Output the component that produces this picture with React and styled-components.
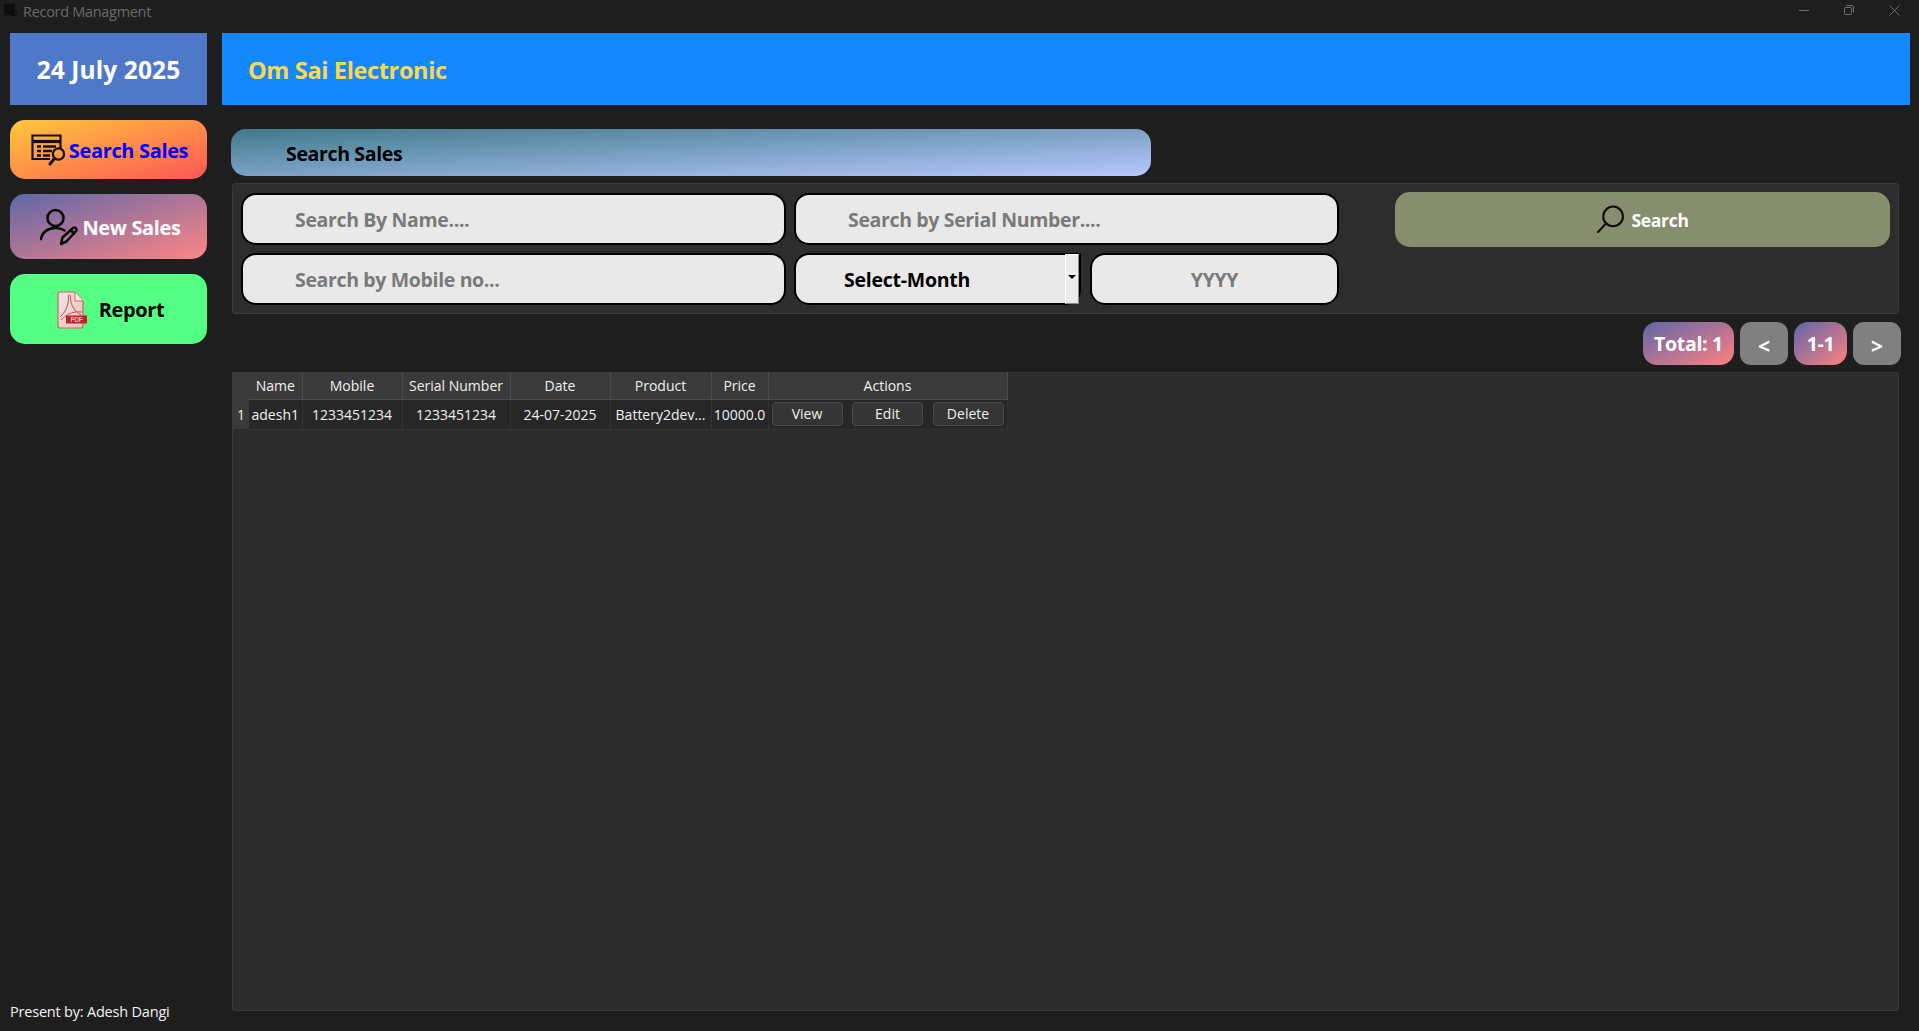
import React from 'react';
import styled, { createGlobalStyle } from 'styled-components';

const GlobalStyle = createGlobalStyle`
    html, body {
        margin: 0;
        padding: 0;
        height: 100%;
        background: #1e1e1e;
        overflow: hidden;
    }
    * {
        box-sizing: border-box;
    }
`;

const FONT = `'Open Sans', 'Noto Sans', sans-serif`;

const Window = styled.div`
    width: 100%;
    height: 100vh;
    display: flex;
    flex-direction: column;
    font-family: ${FONT};
    color: white;
    background: #1e1e1e;
`;

const TitleBar = styled.div`
    height: 33px;
    flex-shrink: 0;
    display: flex;
    align-items: flex-start;
    padding: 3px 19px 0 4px;
    color: #6a6a6a;
    font-size: 14.5px;
    letter-spacing: -0.3px;
    line-height: 18px;
`;

const TitleText = styled.span`
    margin-left: 4px;
`;

const WindowControls = styled.div`
    margin-left: auto;
    display: flex;
    align-items: center;
    gap: 35px;
    height: 14px;
    color: #6f6f6f;
`;

const Body = styled.div`
    flex: 1;
    display: flex;
    min-height: 0;
`;

const Sidebar = styled.aside`
    width: 222px;
    flex-shrink: 0;
    display: flex;
    flex-direction: column;
    padding: 0 15px 0 10px;
`;

const DateBox = styled.div`
    height: 72px;
    background: #4f79c8;
    display: flex;
    align-items: center;
    justify-content: center;
    padding-top: 1px;
    font-size: 24.5px;
    font-weight: 700;
    letter-spacing: 0.1px;
    margin-bottom: 15px;
`;

const NavButton = styled.button`
    height: ${(p) => p.$height}px;
    width: 100%;
    border: none;
    border-radius: 15px;
    margin-bottom: 15px;
    padding: 1px 0 0 ${(p) => p.$shift}px;
    display: flex;
    align-items: center;
    justify-content: center;
    gap: ${(p) => p.$gap}px;
    font-family: ${FONT};
    font-size: 20px;
    font-weight: 700;
    letter-spacing: -0.35px;
    color: ${(p) => p.$color};
    background: ${(p) => p.$bg};
    cursor: pointer;
`;

const Footer = styled.div`
    margin-top: auto;
    margin-bottom: 10px;
    font-size: 14.5px;
    letter-spacing: -0.2px;
    color: #f2f2f2;
    white-space: nowrap;
`;

const Main = styled.main`
    flex: 1;
    min-width: 0;
    display: flex;
    flex-direction: column;
    padding: 0 9px 20px 0;
`;

const Header = styled.header`
    height: 72px;
    flex-shrink: 0;
    background: #1489ff;
    color: #ffd84d;
    display: flex;
    align-items: center;
    padding: 2px 0 0 26px;
    font-size: 23.5px;
    font-weight: 700;
    letter-spacing: -0.35px;
`;

const SectionTitle = styled.div`
    width: 920px;
    height: 47px;
    margin: 24px 0 7px 9px;
    flex-shrink: 0;
    border-radius: 15px;
    background: linear-gradient(to bottom right, #3f7a8a 0%, #b8c8ff 100%);
    color: black;
    display: flex;
    align-items: center;
    padding: 2px 0 0 55px;
    font-size: 19.5px;
    font-weight: 700;
    letter-spacing: -0.35px;
`;

const Panel = styled.section`
    margin: 0 11px 0 10px;
    background: #2d2d2d;
    border: 1px solid #3a3a3a;
    border-radius: 3px;
`;

const FilterPanel = styled(Panel)`
    height: 131px;
    flex-shrink: 0;
    display: flex;
    padding: 9px 8px 0 8px;
`;

const FieldGrid = styled.div`
    display: grid;
    grid-template-columns: 545px 545px;
    grid-auto-rows: 52px;
    column-gap: 8px;
    row-gap: 8px;
`;

const TextField = styled.input`
    width: 100%;
    height: 100%;
    min-width: 0;
    border: 2px solid black;
    border-radius: 15px;
    background: #e9e9e9;
    padding: ${(p) => (p.$centered ? '0' : '0 0 0 52px')};
    text-align: ${(p) => (p.$centered ? 'center' : 'left')};
    font-family: ${FONT};
    font-size: 19.5px;
    font-weight: 700;
    letter-spacing: -0.35px;
    color: #111;
    outline: none;

    &::placeholder {
        color: #7a7a7a;
        opacity: 1;
    }
`;

const MonthYearRow = styled.div`
    display: flex;
    gap: 9px;
`;

const MonthSelect = styled.div`
    width: 287px;
    flex-shrink: 0;
    height: 100%;
    border: 2px solid black;
    border-radius: 15px 0 15px 15px;
    background: #e9e9e9;
    color: black;
    display: flex;
    align-items: stretch;
    font-size: 19.5px;
    font-weight: 700;
    letter-spacing: -0.25px;
`;

const MonthLabel = styled.div`
    flex: 1;
    display: flex;
    align-items: center;
    padding-left: 48px;
`;

const MonthArrow = styled.div`
    width: 14px;
    margin: -1px 0 -1px;
    background: #ececec;
    border-left: 1px solid #fff;
    border-right: 1px solid #8a8a8a;
    border-bottom: 1px solid #8a8a8a;
    border-top: 1px solid #fff;
    display: flex;
    align-items: center;
    justify-content: center;
    padding-bottom: 4px;

    &::after {
        content: '';
        border-left: 4px solid transparent;
        border-right: 4px solid transparent;
        border-top: 4px solid black;
    }
`;

const SearchButton = styled.button`
    margin: -1px 0 0 56px;
    width: 496px;
    height: 55px;
    border: none;
    border-radius: 15px;
    background: #868e6d;
    color: white;
    display: flex;
    align-items: center;
    justify-content: center;
    gap: 6px;
    font-family: ${FONT};
    font-size: 17.5px;
    font-weight: 700;
    letter-spacing: -0.3px;
    cursor: pointer;
`;

const PagerRow = styled.div`
    flex-shrink: 0;
    height: 43px;
    margin: 8px 9px 7px 0;
    display: flex;
    justify-content: flex-end;
    gap: 6px;
`;

const PagerBadge = styled.div`
    width: ${(p) => p.$width}px;
    border-radius: 14px;
    background: linear-gradient(to bottom right, #5f67a8 0%, #ff8080 100%);
    display: flex;
    align-items: center;
    justify-content: center;
    font-size: 19.5px;
    font-weight: 700;
    letter-spacing: -0.3px;
`;

const PagerButton = styled.button`
    width: 48px;
    border: none;
    border-radius: 11px;
    background: #808080;
    color: white;
    font-family: ${FONT};
    font-size: 21px;
    font-weight: 700;
    padding: 4px 0 0;
    cursor: pointer;
`;

const TablePanel = styled(Panel)`
    flex: 1;
    min-height: 0;
    background: #2c2c2c;
`;

const Table = styled.table`
    margin: -1px 0 0 -1px;
    border-collapse: collapse;
    table-layout: fixed;
    width: 775px;
    font-size: 14px;
    color: #f0f0f0;
`;

const HeadCell = styled.th`
    height: 27px;
    padding: 0;
    font-weight: 400;
    background: #3a3a3a;
    border-right: 1px solid #4c4c4c;
    border-bottom: 1px solid #4c4c4c;
    white-space: nowrap;

    &:first-child {
        border: none;
    }
`;

const RowNumber = styled.td`
    padding: 0 0 0 1px;
    background: #3a3a3a;
    font-size: 14px;
    text-align: center;
`;

const Cell = styled.td`
    height: 30px;
    padding: 0;
    background: #272727;
    border-right: 1px solid #333;
    border-bottom: 1px solid #333;
    text-align: center;
    white-space: nowrap;
    overflow: hidden;
`;

const ActionsCell = styled(Cell)`
    padding: 0 3px 1px 3px;
`;

const Actions = styled.div`
    display: flex;
    justify-content: space-between;
`;

const ActionButton = styled.button`
    width: 71px;
    height: 24px;
    padding: 0;
    border: 1px solid #4a4a4a;
    border-radius: 4px;
    background: #353535;
    color: #f0f0f0;
    font-family: ${FONT};
    font-size: 14px;
`;

function AppIcon() {
    return (
        <svg width="15" height="15" viewBox="0 0 15 15" fill="none">
            <rect x="0.5" y="1" width="10" height="11" fill="#0d0d0d" stroke="#111" />
            <circle cx="10.5" cy="10" r="2.5" stroke="#0a0a0a" />
            <path d="M8.5 12 L6.5 14" stroke="#0a0a0a" />
        </svg>
    );
}

function MinimizeIcon() {
    return (
        <svg width="10" height="10" viewBox="0 0 10 10">
            <path d="M0 5.5 H10" stroke="currentColor" />
        </svg>
    );
}

function RestoreIcon() {
    return (
        <svg width="10" height="10" viewBox="0 0 10 10" fill="none">
            <rect x="0.5" y="2.5" width="7" height="7" rx="1" stroke="currentColor" />
            <path d="M2.5 0.5 H8 Q9.5 0.5 9.5 2 V7.5" stroke="currentColor" />
        </svg>
    );
}

function CloseIcon() {
    return (
        <svg width="11" height="11" viewBox="0 0 11 11">
            <path d="M0.5 0.5 L10.5 10.5 M10.5 0.5 L0.5 10.5" stroke="currentColor" />
        </svg>
    );
}

function SalesTableIcon() {
    return (
        <svg width="35" height="33" viewBox="0 0 35 33" fill="none" stroke="#111">
            <path d="M19 25 H1.5 V1.5 H29.5 V14" strokeWidth="2.2" />
            <path d="M1.5 7.5 H29.5" strokeWidth="3.2" />
            <path d="M6 12.5 H10 M6 17 H10 M6 21.5 H10 M12 12.5 H25 M12 17 H21 M12 21.5 H19" strokeWidth="2.4" />
            <circle cx="27.5" cy="20" r="5.6" strokeWidth="2.3" />
            <path d="M23.5 24.5 L19 30" strokeWidth="3" strokeLinecap="round" />
        </svg>
    );
}

function UserPenIcon() {
    return (
        <svg width="38" height="38" viewBox="0 0 38 38" fill="none" stroke="#0b0b0b" strokeWidth="2.6" strokeLinecap="round" strokeLinejoin="round">
            <circle cx="15.5" cy="10" r="8" />
            <path d="M1 31 C2 24 8 20 15.5 20 C19 20 22 21 24.5 22.5" />
            <path d="M21 36 L22.5 29.5 L33 20 C35 18.5 37.5 21 36 23 L26.5 33.5 Z" />
            <path d="M31 22.5 L34 25.5" />
        </svg>
    );
}

function PdfIcon() {
    return (
        <svg width="31" height="38" viewBox="0 0 31 38">
            <defs>
                <linearGradient id="pdfPage" x1="0" y1="0" x2="1" y2="1">
                    <stop offset="0" stopColor="#f6e6e4" />
                    <stop offset="1" stopColor="#dcc4c2" />
                </linearGradient>
            </defs>
            <path d="M1 3 Q1 1 3 1 H18 L26 10 V35 Q26 37 24 37 H3 Q1 37 1 35 Z" fill="url(#pdfPage)" stroke="#d9605f" strokeWidth="1.2" />
            <path d="M18 1 V10 H26" fill="#fbf3f3" stroke="#d9605f" strokeWidth="1" />
            <path d="M3 26 C8 22 12 14 11.5 6 C11 3 13.5 3 13.5 7 C13.5 14 18 21 24 24 M4 29 C10 23 16 20 25 21" fill="none" stroke="#d33b3b" strokeWidth="0.9" />
            <rect x="9" y="24.5" width="21" height="8" fill="#bf2327" />
            <text x="19.5" y="31" fontSize="6.5" fill="#e9b4b4" textAnchor="middle" fontFamily="'Liberation Sans', sans-serif">PDF</text>
        </svg>
    );
}

function MagnifierIcon() {
    return (
        <svg width="29" height="29" viewBox="0 0 28 28" fill="none" stroke="#0b0b0b" strokeLinecap="round">
            <circle cx="16.5" cy="11" r="9.5" strokeWidth="2" />
            <path d="M9.5 18 L2 26" strokeWidth="2" />
        </svg>
    );
}

const columns = [
    { label: '', width: 17 },
    { label: 'Name', width: 53 },
    { label: 'Mobile', width: 100 },
    { label: 'Serial Number', width: 108 },
    { label: 'Date', width: 100 },
    { label: 'Product', width: 101 },
    { label: 'Price', width: 57 },
    { label: 'Actions', width: 239 },
];

const row = ['adesh1', '1233451234', '1233451234', '24-07-2025', 'Battery2dev...', '10000.0'];

export default function App() {
    return (
        <Window>
            <GlobalStyle />
            <TitleBar>
                <AppIcon />
                <TitleText>Record Managment</TitleText>
                <WindowControls>
                    <MinimizeIcon />
                    <RestoreIcon />
                    <CloseIcon />
                </WindowControls>
            </TitleBar>

            <Body>
                <Sidebar>
                    <DateBox>24 July 2025</DateBox>
                    <NavButton $height={59} $gap={3} $shift={2} $color="#0000ff" $bg="linear-gradient(to bottom right, #ffc83c 0%, #ff5555 100%)">
                        <SalesTableIcon />
                        Search Sales
                    </NavButton>
                    <NavButton $height={65} $gap={4} $shift={4} $color="white" $bg="linear-gradient(to bottom right, #5f67a8 0%, #ff8585 100%)">
                        <UserPenIcon />
                        New Sales
                    </NavButton>
                    <NavButton $height={70} $gap={11} $shift={4} $color="black" $bg="#55ff84">
                        <PdfIcon />
                        Report
                    </NavButton>
                    <Footer>Present by: Adesh Dangi</Footer>
                </Sidebar>

                <Main>
                    <Header>Om Sai Electronic</Header>
                    <SectionTitle>Search Sales</SectionTitle>

                    <FilterPanel>
                        <FieldGrid>
                            <TextField placeholder="Search By Name...." />
                            <TextField placeholder="Search by Serial Number...." />
                            <TextField placeholder="Search by Mobile no..." />
                            <MonthYearRow>
                                <MonthSelect>
                                    <MonthLabel>Select-Month</MonthLabel>
                                    <MonthArrow />
                                </MonthSelect>
                                <TextField $centered placeholder="YYYY" />
                            </MonthYearRow>
                        </FieldGrid>
                        <SearchButton>
                            <MagnifierIcon />
                            Search
                        </SearchButton>
                    </FilterPanel>

                    <PagerRow>
                        <PagerBadge $width={91}>Total: 1</PagerBadge>
                        <PagerButton>&lt;</PagerButton>
                        <PagerBadge $width={53}>1-1</PagerBadge>
                        <PagerButton>&gt;</PagerButton>
                    </PagerRow>

                    <TablePanel>
                        <Table>
                            <colgroup>
                                {columns.map((c) => (
                                    <col key={c.label} style={{ width: c.width }} />
                                ))}
                            </colgroup>
                            <thead>
                                <tr>
                                    {columns.map((c) => (
                                        <HeadCell key={c.label}>{c.label}</HeadCell>
                                    ))}
                                </tr>
                            </thead>
                            <tbody>
                                <tr>
                                    <RowNumber>1</RowNumber>
                                    {row.map((value, i) => (
                                        <Cell key={i}>{value}</Cell>
                                    ))}
                                    <ActionsCell>
                                        <Actions>
                                            <ActionButton>View</ActionButton>
                                            <ActionButton>Edit</ActionButton>
                                            <ActionButton>Delete</ActionButton>
                                        </Actions>
                                    </ActionsCell>
                                </tr>
                            </tbody>
                        </Table>
                    </TablePanel>
                </Main>
            </Body>
        </Window>
    );
}
